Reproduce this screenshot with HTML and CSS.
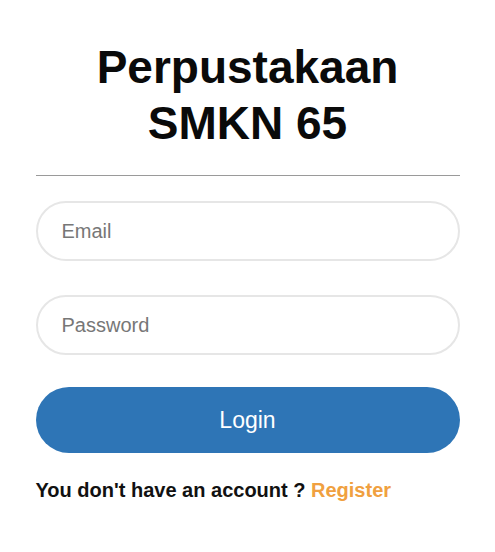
FILE: index.html
```html
<!DOCTYPE html>
<html>
<head>
<meta charset="utf-8">
<link rel="stylesheet" href="styles.css">
</head>
<body>
<div class="card">
  <h1 class="title">Perpustakaan<br>SMKN 65</h1>
  <hr class="divider">
  <form class="form">
    <input class="field" type="email" placeholder="Email">
    <input class="field" type="password" placeholder="Password">
    <button class="btn" type="button">Login</button>
  </form>
  <p class="note">You don't have an account ? <a class="link" href="#">Register</a></p>
</div>
</body>
</html>
```
FILE: styles.css
```css
* { box-sizing: border-box; }
html, body { margin: 0; padding: 0; background: #fff; }
body { font-family: "Liberation Sans", Arial, sans-serif; }
.card {
  width: 424px;
  margin: 0 auto;
  padding-top: 39px;
  display: flex;
  flex-direction: column;
}
.title {
  margin: 0;
  font-size: 46px;
  line-height: 56px;
  font-weight: bold;
  text-align: center;
  color: #0a0a0a;
}
.divider {
  margin: 24px 0 0;
  border: 0;
  border-top: 1px solid #9a9a9a;
  height: 0;
}
.form {
  margin-top: 25px;
  display: flex;
  flex-direction: column;
  gap: 34px;
}
.field {
  height: 60px;
  border: 2px solid #e6e6e6;
  border-radius: 30px;
  padding: 0 24px;
  font-family: "Liberation Sans", Arial, sans-serif;
  font-size: 20px;
  color: #333;
  outline: none;
  background: #fff;
}
.field::placeholder { color: #777; }
.btn {
  margin-top: -2px;
  height: 66px;
  border: 0;
  border-radius: 33px;
  background: #2e75b6;
  color: #fff;
  font-family: "Liberation Sans", Arial, sans-serif;
  font-size: 23px;
  cursor: pointer;
}
.note {
  margin: 26px 0 0;
  font-size: 20px;
  font-weight: bold;
  color: #111;
}
.link {
  color: #f0a040;
  text-decoration: none;
}
```
